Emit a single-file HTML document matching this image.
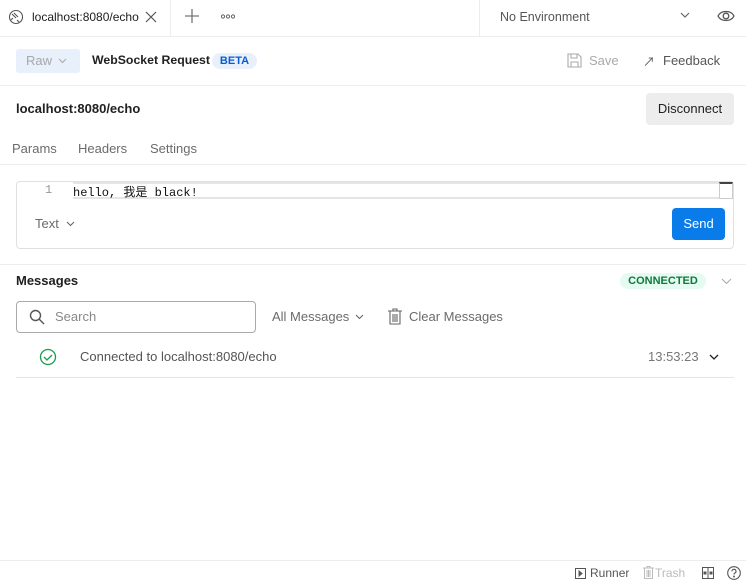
<!DOCTYPE html>
<html><head><meta charset="utf-8"><style>
*{box-sizing:border-box;margin:0;padding:0}
body{width:746px;height:587px;background:#fff;font-family:"Liberation Sans","Noto Sans CJK SC",sans-serif;font-size:13px;color:#212121;position:relative;overflow:hidden}
.a{position:absolute;white-space:nowrap}
.hl{position:absolute;left:0;right:0;height:1px;background:#ededed}
.g{color:#6b6b6b}
</style></head><body>
<div class="hl" style="top:36px"></div>
<div class="a" style="left:170px;top:0;width:1px;height:36px;background:#ededed"></div>
<div class="a" style="left:479px;top:0;width:1px;height:36px;background:#ededed"></div>
<svg class="a" style="left:8px;top:9px" width="16" height="16" viewBox="0 0 16 16" fill="none" stroke="#555" stroke-width="1.1"><circle cx="8" cy="8" r="6.5"/><path d="M4 5l4 4M6 4l4 4M3 11l2-2M11 13l-2-2"/></svg>
<div class="a" style="left:32px;top:10px;font-size:12px">localhost:8080/echo</div>
<svg class="a" style="left:145px;top:11px" width="12" height="12" viewBox="0 0 12 12" stroke="#555" stroke-width="1.2"><path d="M1 1l10 10M11 1L1 11"/></svg>
<svg class="a" style="left:185px;top:9px" width="14" height="14" viewBox="0 0 14 14" stroke="#777" stroke-width="1.3"><path d="M7 0v14M0 7h14"/></svg>
<svg class="a" style="left:221px;top:14px" width="14" height="5" viewBox="0 0 14 5" fill="none" stroke="#666" stroke-width="1"><circle cx="2" cy="2.5" r="1.6"/><circle cx="7" cy="2.5" r="1.6"/><circle cx="12" cy="2.5" r="1.6"/></svg>
<div class="a" style="left:500px;top:10px;font-size:12.5px;color:#555">No Environment</div>
<svg class="a" style="left:680px;top:12px" width="10" height="7" viewBox="0 0 10 7" fill="none" stroke="#666" stroke-width="1.2"><path d="M1 1l4 4 4-4"/></svg>
<svg class="a" style="left:717px;top:9px" width="18" height="14" viewBox="0 0 18 14" fill="none" stroke="#555" stroke-width="1.3"><path d="M1 7C4 1 14 1 17 7C14 13 4 13 1 7z"/><circle cx="9" cy="7" r="2.8"/></svg>
<div class="a" style="left:16px;top:49px;width:64px;height:24px;background:#e8f0fc;border-radius:3px"></div>
<div class="a" style="left:26px;top:53px;color:#a8a8a8">Raw</div>
<svg class="a" style="left:58px;top:58px" width="9" height="6" viewBox="0 0 9 6" fill="none" stroke="#aaa" stroke-width="1.1"><path d="M1 1l3.5 3.5L8 1"/></svg>
<div class="a" style="left:92px;top:53px;font-weight:bold;font-size:12.3px;color:#212121">WebSocket Request</div>
<div class="a" style="left:212px;top:53px;width:45px;height:16px;background:#e8f0fc;border-radius:8px;color:#0b5ccf;font-size:11px;font-weight:bold;text-align:center;line-height:16px">BETA</div>
<svg class="a" style="left:567px;top:53px" width="15" height="15" viewBox="0 0 15 15" fill="none" stroke="#aaa" stroke-width="1.1"><path d="M1 1h10l3 3v10H1z M4 1v4h6V1 M4 14V9h7v5"/></svg>
<div class="a" style="left:589px;top:53px;color:#aaa">Save</div>
<div class="a" style="left:643px;top:53px;color:#555;font-size:12px">↗</div>
<div class="a" style="left:663px;top:53px;color:#555">Feedback</div>
<div class="hl" style="top:85px"></div>
<div class="a" style="left:16px;top:101px;font-weight:bold">localhost:8080/echo</div>
<div class="a" style="left:646px;top:93px;width:88px;height:32px;background:#ededed;border-radius:4px;text-align:center;line-height:32px">Disconnect</div>
<div class="a g" style="left:12px;top:141px">Params</div>
<div class="a g" style="left:78px;top:141px">Headers</div>
<div class="a g" style="left:150px;top:141px">Settings</div>
<div class="hl" style="top:164px"></div>
<div class="a" style="left:16px;top:181px;width:718px;height:68px;border:1px solid #e0e0e0;border-radius:4px"></div>
<div class="a" style="left:73px;top:182px;width:646px;height:17px;border-top:2px solid #e5e5e5;border-bottom:2px solid #e5e5e5"></div>
<div class="a" style="left:719px;top:182px;width:14px;height:17px;border:1px solid #ccc;border-top:2px solid #444"></div>
<div class="a" style="left:45px;top:183px;font-family:'Liberation Mono',monospace;font-size:12px;color:#999">1</div>
<div class="a" style="left:73px;top:183px;font-family:'Liberation Mono','Noto Sans CJK SC',monospace;font-size:12px;color:#111">hello, 我是 black!</div>
<div class="a g" style="left:35px;top:216px">Text</div>
<svg class="a" style="left:66px;top:221px" width="9" height="6" viewBox="0 0 9 6" fill="none" stroke="#666" stroke-width="1.1"><path d="M1 1l3.5 3.5L8 1"/></svg>
<div class="a" style="left:672px;top:208px;width:53px;height:32px;background:#0a7ce9;border-radius:4px;color:#fff;text-align:center;line-height:32px">Send</div>
<div class="hl" style="top:264px"></div>
<div class="a" style="left:16px;top:273px;font-weight:bold">Messages</div>
<div class="a" style="left:620px;top:273px;width:86px;height:16px;background:#e5faf0;border-radius:8px;color:#0e7a3a;font-size:11px;font-weight:bold;text-align:center;line-height:16px">CONNECTED</div>
<svg class="a" style="left:721px;top:278px" width="11" height="7" viewBox="0 0 11 7" fill="none" stroke="#aaa" stroke-width="1.1"><path d="M1 1l4.5 4.5L10 1"/></svg>
<div class="a" style="left:16px;top:301px;width:240px;height:32px;border:1px solid #aaa;border-radius:4px"></div>
<svg class="a" style="left:29px;top:309px" width="16" height="16" viewBox="0 0 16 16" fill="none" stroke="#555" stroke-width="1.4"><circle cx="6.5" cy="6.5" r="5"/><path d="M10 10l5 5"/></svg>
<div class="a" style="left:55px;top:309px;color:#888">Search</div>
<div class="a g" style="left:272px;top:309px">All Messages</div>
<svg class="a" style="left:355px;top:314px" width="9" height="6" viewBox="0 0 9 6" fill="none" stroke="#666" stroke-width="1.1"><path d="M1 1l3.5 3.5L8 1"/></svg>
<svg class="a" style="left:388px;top:308px" width="14" height="17" viewBox="0 0 14 17" fill="none" stroke="#666" stroke-width="1.1"><path d="M0 3h14M5 3V1h4v2M2 3v13h10V3M5 6v8M7 6v8M9 6v8"/></svg>
<div class="a g" style="left:409px;top:309px">Clear Messages</div>
<svg class="a" style="left:39px;top:348px" width="18" height="18" viewBox="0 0 18 18" fill="none" stroke="#1a9b50" stroke-width="1.3"><circle cx="9" cy="9" r="7.5"/><path d="M5 9l3 3 5-5"/></svg>
<div class="a" style="left:80px;top:349px;color:#555">Connected to localhost:8080/echo</div>
<div class="a" style="left:648px;top:349px;color:#777">13:53:23</div>
<svg class="a" style="left:709px;top:354px" width="10" height="6" viewBox="0 0 10 6" fill="none" stroke="#222" stroke-width="1.3"><path d="M1 1l4 4 4-4"/></svg>
<div class="a" style="left:16px;top:377px;width:718px;height:1px;background:#e5e5e5"></div>
<div class="hl" style="top:560px"></div>
<svg class="a" style="left:575px;top:568px" width="11" height="11" viewBox="0 0 11 11" fill="none" stroke="#555"><rect x=".5" y=".5" width="10" height="10"/><path d="M4 3l3 2.5L4 8z" fill="#555"/></svg>
<div class="a" style="left:590px;top:566px;font-size:12px;color:#555">Runner</div>
<svg class="a" style="left:643px;top:566px" width="11" height="13" viewBox="0 0 11 13" fill="none" stroke="#bbb"><path d="M0 2h11M4 2V.5h3V2M1.5 2v10.5h8V2M4 4v7M5.5 4v7M7 4v7"/></svg>
<div class="a" style="left:655px;top:566px;font-size:12px;color:#bbb">Trash</div>
<svg class="a" style="left:702px;top:567px" width="12" height="12" viewBox="0 0 12 12" fill="none" stroke="#555"><rect x=".5" y=".5" width="11" height="11"/><path d="M6 0v12"/><rect x="2" y="5" width="2" height="2" fill="#555"/><rect x="8" y="5" width="2" height="2" fill="#555"/></svg>
<svg class="a" style="left:727px;top:566px" width="14" height="14" viewBox="0 0 14 14" fill="none" stroke="#555" stroke-width="1.1"><circle cx="7" cy="7" r="6.3"/><path d="M5 5.3a2 2 0 1 1 2.6 1.9c-.5.2-.6.6-.6 1.3"/><circle cx="7" cy="10.5" r=".4" fill="#555"/></svg>
</body></html>
